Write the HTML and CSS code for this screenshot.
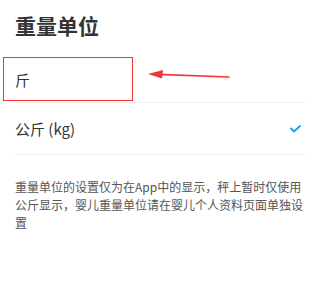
FILE: index.html
```html
<!DOCTYPE html>
<html lang="zh-CN">
<head>
    <meta charset="UTF-8">
    <meta name="viewport" content="width=device-width, initial-scale=1.0">
    <title>重量单位</title>
    <link rel="stylesheet" href="styles.css">
</head>
<body>
    <div class="page">
        <h2 class="title">重量单位</h2>

        <div class="list">
            <div class="row short">
                <span class="label">斤</span>
            </div>
            <div class="row">
                <span class="label">公斤 (kg)</span>
                <svg class="check" width="11" height="8" viewBox="0 0 11 8">
                    <path d="M1 3.5 L4 6.5 L10 1" fill="none" stroke="#1e9be9" stroke-width="1.8" stroke-linecap="round" stroke-linejoin="round"/>
                </svg>
            </div>
        </div>

        <p class="note">重量单位的设置仅为在App中的显示，秤上暂时仅使用公斤显示，婴儿重量单位请在婴儿个人资料页面单独设置</p>

        <!-- annotation -->
        <div class="mark-box"></div>
        <svg class="mark-arrow" width="90" height="16" viewBox="145 68 90 16">
            <line x1="158" y1="74.4" x2="229" y2="77" stroke="#f2353a" stroke-width="1.6" stroke-linecap="round"/>
            <polygon points="148,74 163,70 162,78.5" fill="#f2353a"/>
        </svg>
    </div>
</body>
</html>
```

FILE: styles.css
```css
body {
    margin: 0;
    background-color: #fff;
    font-family: "Noto Sans CJK SC", "Noto Sans", sans-serif;
    color: #333;
}

.page {
    position: relative;
    width: 320px;
    height: 281px;
    overflow: hidden;
}

.title {
    margin: 0 0 18px;
    padding: 13px 15px 0;
    font-size: 21px;
    line-height: 25px;
    font-weight: bold;
    color: #333;
}

.row {
    display: flex;
    align-items: center;
    justify-content: space-between;
    box-sizing: border-box;
    height: 52px;
    margin: 0 14px 0 15px;
    padding-right: 5px;
    border-bottom: 1px solid #efefef;
}

.row.short {
    height: 47px;
}

.label {
    font-size: 15px;
    color: #333;
}

.check {
    display: block;
}

.note {
    margin: 23px 0 0;
    padding: 0 15px;
    width: 290px;
    font-size: 12px;
    line-height: 18px;
    color: #555;
}

.mark-box {
    position: absolute;
    left: 3px;
    top: 57px;
    width: 130px;
    height: 44px;
    box-sizing: border-box;
    border: 1.5px solid #f2353a;
}

.mark-arrow {
    position: absolute;
    left: 145px;
    top: 68px;
}
```
